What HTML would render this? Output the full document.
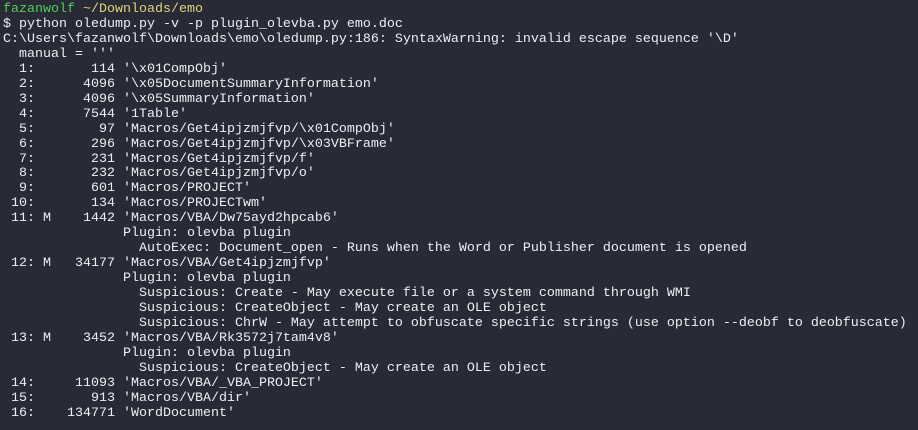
<!DOCTYPE html>
<html><head><style>
html,body{margin:0;padding:0;background:#282a36;width:918px;height:430px;overflow:hidden}
pre{margin:0;padding:3px 0 0 3px;font-family:"Liberation Mono",monospace;font-size:13.33px;line-height:14.95px;color:#eceff4;white-space:pre}
.g{color:#4fcf57}.y{color:#e2d47a}
</style></head><body><pre><span class="g">fazanwolf</span> <span class="y">~/Downloads/emo</span>
$ python oledump.py -v -p plugin_olevba.py emo.doc
C:\Users\fazanwolf\Downloads\emo\oledump.py:186: SyntaxWarning: invalid escape sequence '\D'
  manual = '''
  1:       114 '\x01CompObj'
  2:      4096 '\x05DocumentSummaryInformation'
  3:      4096 '\x05SummaryInformation'
  4:      7544 '1Table'
  5:        97 'Macros/Get4ipjzmjfvp/\x01CompObj'
  6:       296 'Macros/Get4ipjzmjfvp/\x03VBFrame'
  7:       231 'Macros/Get4ipjzmjfvp/f'
  8:       232 'Macros/Get4ipjzmjfvp/o'
  9:       601 'Macros/PROJECT'
 10:       134 'Macros/PROJECTwm'
 11: M    1442 'Macros/VBA/Dw75ayd2hpcab6'
               Plugin: olevba plugin
                 AutoExec: Document_open - Runs when the Word or Publisher document is opened
 12: M   34177 'Macros/VBA/Get4ipjzmjfvp'
               Plugin: olevba plugin
                 Suspicious: Create - May execute file or a system command through WMI
                 Suspicious: CreateObject - May create an OLE object
                 Suspicious: ChrW - May attempt to obfuscate specific strings (use option --deobf to deobfuscate)
 13: M    3452 'Macros/VBA/Rk3572j7tam4v8'
               Plugin: olevba plugin
                 Suspicious: CreateObject - May create an OLE object
 14:     11093 'Macros/VBA/_VBA_PROJECT'
 15:       913 'Macros/VBA/dir'
 16:    134771 'WordDocument'</pre></body></html>
